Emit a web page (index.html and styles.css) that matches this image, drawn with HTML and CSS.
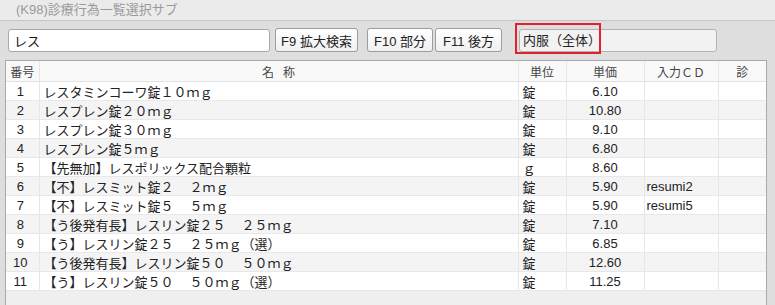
FILE: index.html
```html
<!DOCTYPE html>
<html lang="ja">
<head>
    <meta charset="UTF-8">
    <meta name="viewport" content="width=device-width, initial-scale=1.0">
    <title>(K98)診療行為一覧選択サブ</title>
    <link rel="stylesheet" href="styles.css">
</head>
<body>
    <div class="titlebar">(K98)診療行為一覧選択サブ</div>

    <div class="toolbar">
        <input type="text" class="search" value="レス">
        <button class="btn btn-f9">F9 拡大検索</button>
        <button class="btn btn-f10">F10 部分</button>
        <button class="btn">F11 後方</button>
        <div class="kind-wrap">
            <div class="kind">内服（全体）</div>
            <div class="mark"></div>
        </div>
    </div>

    <div class="list">
        <table>
            <colgroup>
                <col class="c-no">
                <col class="c-name">
                <col class="c-unit">
                <col class="c-price">
                <col class="c-cd">
                <col class="c-sin">
            </colgroup>
            <thead>
                <tr>
                    <th class="no">番号</th>
                    <th><span class="gap">名</span>称</th>
                    <th>単位</th>
                    <th>単価</th>
                    <th>入力ＣＤ</th>
                    <th>診</th>
                </tr>
            </thead>
            <tbody>
                <tr><td class="no">1</td><td>レスタミンコーワ錠１０ｍｇ</td><td>錠</td><td class="price">6.10</td><td></td><td></td></tr>
                <tr><td class="no">2</td><td>レスプレン錠２０ｍｇ</td><td>錠</td><td class="price">10.80</td><td></td><td></td></tr>
                <tr><td class="no">3</td><td>レスプレン錠３０ｍｇ</td><td>錠</td><td class="price">9.10</td><td></td><td></td></tr>
                <tr><td class="no">4</td><td>レスプレン錠５ｍｇ</td><td>錠</td><td class="price">6.80</td><td></td><td></td></tr>
                <tr><td class="no">5</td><td>【先無加】レスポリックス配合顆粒</td><td>ｇ</td><td class="price">8.60</td><td></td><td></td></tr>
                <tr><td class="no">6</td><td>【不】レスミット錠２　 ２ｍｇ</td><td>錠</td><td class="price">5.90</td><td class="cd">resumi2</td><td></td></tr>
                <tr><td class="no">7</td><td>【不】レスミット錠５　 ５ｍｇ</td><td>錠</td><td class="price">5.90</td><td class="cd">resumi5</td><td></td></tr>
                <tr><td class="no">8</td><td>【う後発有長】レスリン錠２５　 ２５ｍｇ</td><td>錠</td><td class="price">7.10</td><td></td><td></td></tr>
                <tr><td class="no">9</td><td>【う】レスリン錠２５　 ２５ｍｇ（選）</td><td>錠</td><td class="price">6.85</td><td></td><td></td></tr>
                <tr><td class="no">10</td><td>【う後発有長】レスリン錠５０　 ５０ｍｇ</td><td>錠</td><td class="price">12.60</td><td></td><td></td></tr>
                <tr><td class="no">11</td><td>【う】レスリン錠５０　 ５０ｍｇ（選）</td><td>錠</td><td class="price">11.25</td><td></td><td></td></tr>
            </tbody>
        </table>
    </div>
</body>
</html>
```

FILE: styles.css
```css
body {
    margin: 0;
    width: 775px;
    height: 305px;
    overflow: hidden;
    background-color: #dedede;
    font-family: "Liberation Sans", "Noto Sans CJK JP", sans-serif;
    color: #222;
    text-spacing-trim: space-all;
}

.titlebar {
    height: 20px;
    line-height: 20px;
    padding-left: 16px;
    font-size: 13px;
    color: #9a9a9a;
    background-color: #ebebeb;
    border-bottom: 1px solid #c6c6c6;
}

.toolbar {
    display: flex;
    align-items: center;
    padding: 7px 0 0 8px;
    height: 24px;
}

.search {
    box-sizing: border-box;
    width: 262px;
    height: 23px;
    margin: 0 5px 0 0;
    padding: 0 5px;
    font-family: inherit;
    font-size: 13px;
    color: #111;
    background-color: #fff;
    border: 1px solid #a8a8a8;
    border-radius: 3px;
    outline: none;
}

.btn {
    box-sizing: border-box;
    height: 24px;
    padding: 0 5px;
    font-family: inherit;
    font-size: 13px;
    color: #222;
    background: linear-gradient(#ffffff, #f0f0f0);
    border: 1px solid #9d9d9d;
    border-radius: 3px;
    margin-right: 2px;
}

.btn-f9 {
    width: 83px;
    margin-right: 9px;
}

.btn-f10 {
    width: 66px;
}

.btn-f10 + .btn {
    width: 67px;
}

.kind-wrap {
    position: relative;
    margin-left: 15px;
}

.kind {
    box-sizing: border-box;
    width: 198px;
    height: 23px;
    line-height: 21px;
    padding-left: 3px;
    font-size: 13px;
    color: #222;
    background-color: #f2f2f2;
    border: 1px solid #b2b2b2;
    border-radius: 3px;
}

.mark {
    position: absolute;
    left: -4px;
    top: -6px;
    width: 82px;
    height: 27px;
    border: 2px solid #e3202c;
}

.list {
    box-sizing: border-box;
    margin: 8px 0 0 5px;
    width: 762px;
    height: 250px;
    background-color: #efefef;
    border: 1px solid #a9a9a9;
    border-bottom: none;
}

table {
    width: 760px;
    border-collapse: collapse;
    table-layout: fixed;
    font-size: 13px;
}

.c-no { width: 33px; }
.c-unit { width: 48px; }
.c-price { width: 78px; }
.c-cd { width: 74px; }
.c-sin { width: 48px; }

th {
    height: 20px;
    padding: 0;
    font-family: "Noto Sans CJK JP", sans-serif;
    font-size: 12px;
    font-weight: normal;
    color: #444;
    background-color: #f9f9f9;
    border-right: 1px solid #e6e6e6;
    border-bottom: 1px solid #e2e2e2;
}

th .gap {
    margin-right: 9px;
}

td {
    height: 18px;
    padding: 0 0 0 4px;
    white-space: pre;
    overflow: hidden;
    background-color: #fff;
    border-right: 1px solid #e6e6e6;
    border-bottom: 1px solid #e8e8e8;
    font-family: "Noto Sans CJK JP", sans-serif;
    font-size: 13px;
    line-height: 17px;
}

tbody tr:nth-child(even) td {
    background-color: #f4f4f4;
}

td.no {
    padding: 0 4px 0 0;
    text-align: center;
    font-family: "Liberation Sans", sans-serif;
}

td.price {
    padding: 0;
    text-align: center;
    font-family: "Liberation Sans", sans-serif;
}

td.cd {
    padding-left: 2px;
    font-family: "Liberation Sans", sans-serif;
}

th:last-child, td:last-child {
    border-right: none;
}
```
